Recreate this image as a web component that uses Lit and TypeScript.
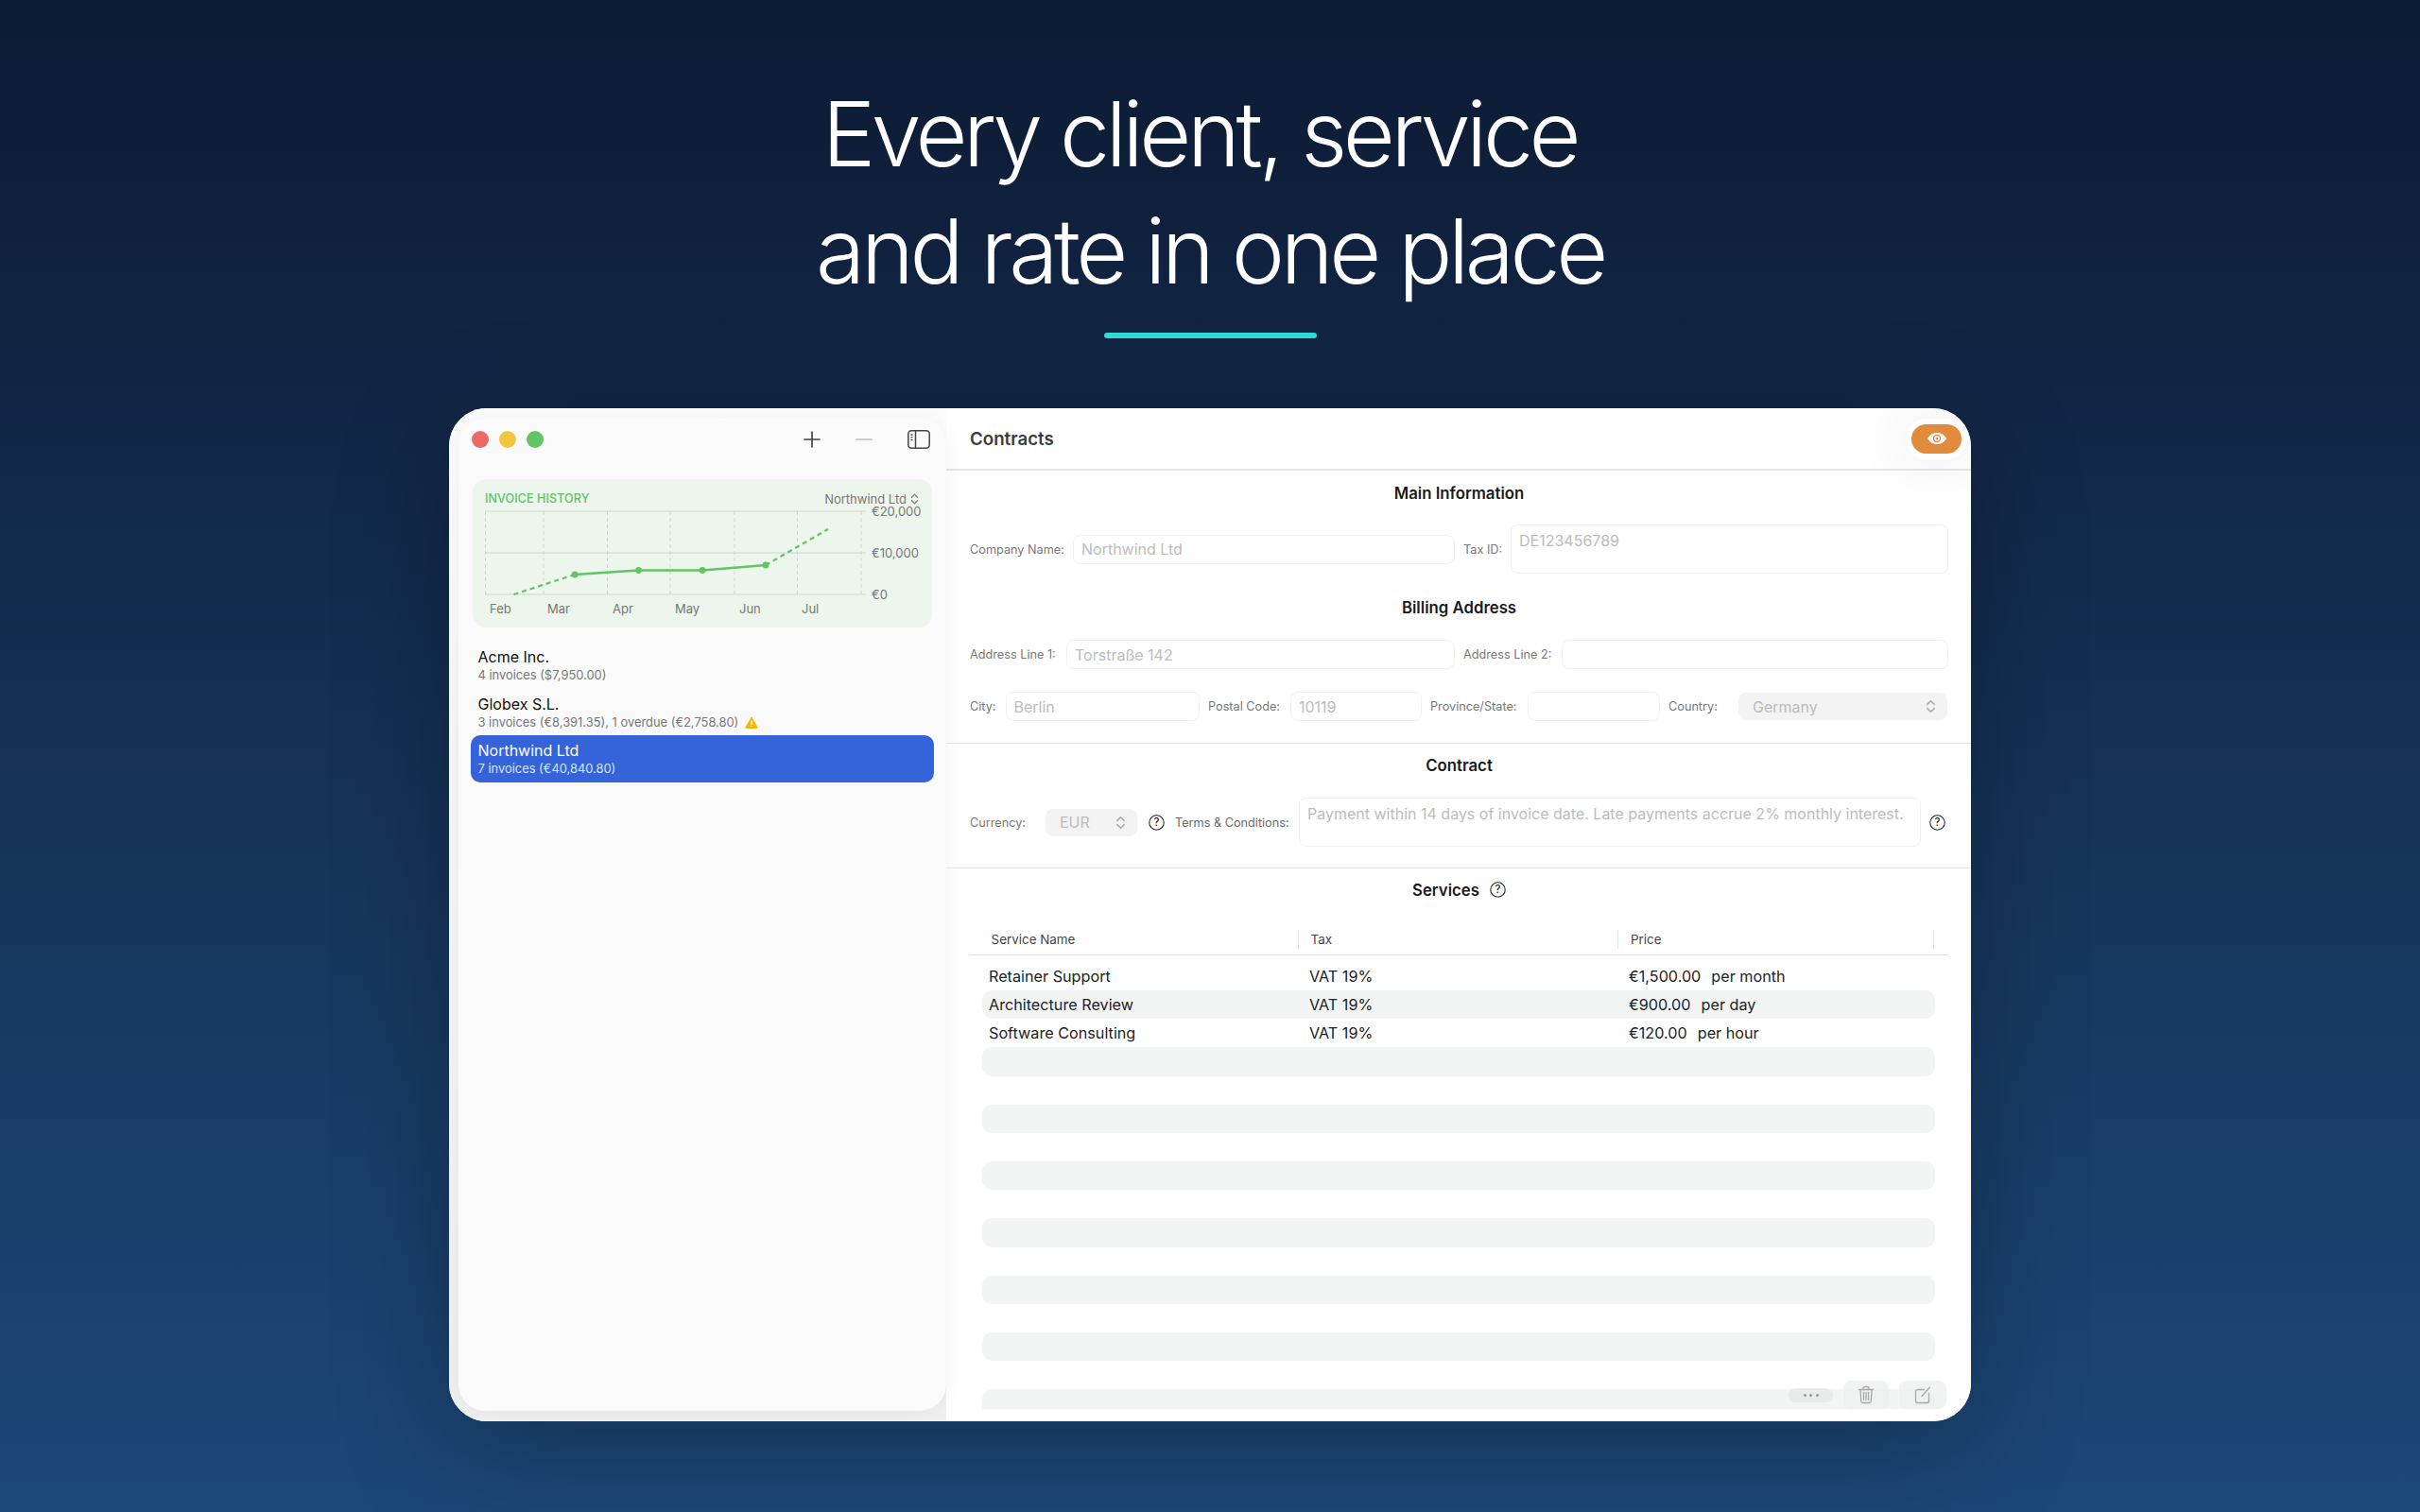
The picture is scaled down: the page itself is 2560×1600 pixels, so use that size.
import { LitElement, html, css, svg } from "lit";
import { customElement } from "lit/decorators.js";

const chevrons = (cls = "chev") => html`<svg class=${cls} viewBox="0 0 10 16" fill="none" stroke="currentColor" stroke-width="1.4" stroke-linecap="round" stroke-linejoin="round"><path d="M1.5 6 5 2.500 8.500 6M1.500 10 5 13.500 8.500 10"/></svg>`;
const help = (cls = "help") => html`<svg class=${cls} viewBox="0 0 16 16"><circle cx="8" cy="8" r="7.300" fill="none" stroke="#222" stroke-width="1"/><text x="8" y="11.700" text-anchor="middle" font-size="10.500" font-weight="500" fill="#222" font-family="Inter, sans-serif">?</text></svg>`;

const gridX = [13.5, 75, 142.5, 209, 277, 343.5, 411];
const months: [string, number][] = [["Feb", 18], ["Mar", 79], ["Apr", 148], ["May", 214], ["Jun", 282], ["Jul", 348]];
const yLabels: [string, number][] = [["€20,000", 1], ["€10,000", 45], ["€0", 89]];

const rows = [
  ["Retainer Support", "VAT 19%", "€1,500.00", "per month"],
  ["Architecture Review", "VAT 19%", "€900.00", "per day"],
  ["Software Consulting", "VAT 19%", "€120.00", "per hour"],
  ...Array.from({ length: 13 }, () => ["", "", "", ""]),
];

@customElement("app-root")
export class AppRoot extends LitElement {
  static styles = css`
    :host { display: block; width: 2560px; height: 1600px; overflow: hidden; font-family: Inter, "Liberation Sans", sans-serif; background: linear-gradient(180deg, #0d1a33 0%, #1c4878 100%); }
    * { box-sizing: border-box; }
    .page { display: flex; flex-direction: column; align-items: center; padding-top: 80px; height: 100%; }
    h1 { margin: 0; font-size: 95px; line-height: 124px; font-weight: 350; color: #fff; text-align: center; letter-spacing: -4.400px; }
    h1 span { display: block; }
    h1 .l1 { padding-right: 22px; }
    .bar { width: 225px; height: 6px; border-radius: 3px; background: #2fdcd6; margin-top: 24px; }
    .shadow { width: 1610px; height: 1072px; margin-top: 74px; border-radius: 40px; box-shadow: 0 30px 120px rgba(0,0,0,.28); }
    .win { position: relative; width: 1610px; height: 1072px; border-radius: 40px; overflow: hidden; background: #f4f4f4; display: grid; grid-template-columns: 526px 1fr; grid-template-rows: minmax(0, 1fr); }
    .side-wrap { padding: 11px 0 11px 10px; background: linear-gradient(180deg, #fcfcfc 0%, #f5f5f5 40%, #efefef 100%); position: relative; z-index: 2; }
    .side { height: 100%; background: #fafafa; border-radius: 28px; box-shadow: 0 0 22px rgba(0,0,0,.05); }
    .tools { height: 44px; margin-bottom: 20px; display: flex; align-items: center; padding: 0 17px 0 14px; }
    .light { width: 18px; height: 18px; border-radius: 50%; margin-right: 11px; }
    .red { background: #ec6a66; } .yel { background: #f3c63f; } .grn { background: #62c462; }
    .tools .sp { flex: 1; }
    .tools svg { display: block; }
    .ic-plus { width: 18px; height: 18px; margin-right: 37px; }
    .ic-minus { width: 18px; height: 18px; margin-right: 37px; }
    .ic-side { width: 24px; height: 20px; }
    .card { margin: 0 15px; height: 157px; border-radius: 14px; background: #ecf6ec; }
    .card-h { height: 33px; padding: 13px 14px 0 13px; display: flex; justify-content: space-between; align-items: flex-start; font-size: 12.5px; line-height: 16px; }
    .card-t { color: #60c066; font-weight: 500; letter-spacing: .1px; }
    .pick { color: #777; display: flex; align-items: center; gap: 4px; font-size: 13px; height: 16px; }
    .chev { width: 9px; height: 14px; display: block; }
    .chart { display: block; width: 486px; height: 124px; overflow: visible; }
    .chart text { font-family: Inter, sans-serif; font-size: 13px; fill: #777; }
    .list { margin: 15px 13px 0 13px; }
    .item { height: 49.5px; padding: 6px 8px 0 7.5px; border-radius: 10px; color: #111; }
    .name { font-size: 16px; line-height: 20px; }
    .sub { font-size: 12.9px; line-height: 20px; color: #777; display: flex; align-items: center; gap: 7px; }
    .item.sel { background: #3563d9; color: #fff; }
    .item.sel .sub { color: #dbe4fa; }
    .warn { width: 14px; height: 13px; }
    .main { background: #fff; display: flex; flex-direction: column; min-width: 0; min-height: 0; padding-bottom: 13px; position: relative; }
    .main > * { flex: none; }
    .top { height: 66px; display: flex; align-items: center; justify-content: space-between; padding: 0 10px 0 25px; border-bottom: 2px solid #e6e6e6; }
    .top b { font-size: 18.700px; font-weight: 600; color: #3d3d3d; }
    .pill { width: 53px; height: 31px; border-radius: 16px; background: #e38b3d; display: flex; align-items: center; justify-content: center; box-shadow: 0 0 0 6px #fff, 0 0 50px 22px rgba(0,0,0,.045); }
    .pill svg { width: 22px; height: 14px; }
    .sec { text-align: center; font-size: 16.800px; line-height: 20px; font-weight: 600; color: #1a1a1a; }
    .pad { padding: 0 24px 0 25px; }
    .s1 { margin-top: 14px; }
    .g { display: grid; align-items: center; margin-top: 24px; }
    .r1 { grid-template-columns: 109px 404px 59px 463px; margin-top: 23px; }
    .r2 { grid-template-columns: 102px 411px 113px 409px; }
    .r3 { grid-template-columns: 37.5px 205.5px 96px 139px 112px 140px 83px 221px; }
    .r4 { grid-template-columns: 80px 97px 40px 131px 658px 29px; }
    .lab { font-size: 12.700px; color: #777; white-space: nowrap; }
    .lab.in { padding-left: 9px; }
    .lab.dk { color: #6a6a6a; }
    .f { height: 31px; border: 1.5px solid #f0f0f0; border-radius: 8px; font-size: 16px; color: #bcbcbc; padding: 0 8px; display: flex; align-items: center; white-space: nowrap; }
    .f.tall { height: 52px; align-items: flex-start; padding-top: 6px; }
    .f.tx { height: 52px; align-items: flex-start; padding-top: 6px; overflow: hidden; }
    .sel-f { height: 29px; border-radius: 8px; background: #f3f3f3; font-size: 16px; color: #bcbcbc; display: flex; align-items: center; justify-content: space-between; padding: 0 12px 0 15px; }
    .sel-f .chev { color: #aaa; width: 11px; height: 17px; }
    .help { width: 17px; height: 17px; display: block; }
    .help-c { justify-self: center; }
    .help-e { justify-self: end; margin-right: 3px; }
    hr { border: 0; border-top: 1.5px solid #e8e8e8; margin: 0; }
    .m23 { margin-top: 23px; }
    .m22 { margin-top: 21.500px; }
    .m13 { margin-top: 13px; }
    .h1 { margin-top: 26px; }
    .svc { display: flex; justify-content: center; align-items: center; gap: 11px; }
    .thead { display: grid; grid-template-columns: 347.5px 338.5px 334px; margin: 32px 0 0; height: 27px; padding-bottom: 7px; border-bottom: 1.5px solid #e4e4e4; align-items: stretch; }
    .thead div { font-size: 13.400px; color: #444; display: flex; align-items: center; border-right: 1.5px solid #e6e6e6; padding-left: 13px; height: 20px; }
    .thead div:first-child { padding-left: 22.6px; }
    .main > .body { flex: 1; min-height: 0; overflow: hidden; margin: 7.500px 38px 0 38px; }
    .tr { display: grid; grid-template-columns: 339px 338px 1fr; height: 30.17px; align-items: center; padding-left: 7px; border-radius: 10px; font-size: 16.200px; color: #222; white-space: nowrap; }
    .tr:nth-child(even) { background: #f3f5f5; }
    .price { display: flex; gap: 11px; }
    .main > .float { position: absolute; right: 26px; bottom: 13px; display: flex; align-items: center; gap: 11px; }
    .dots { width: 47px; height: 15px; border-radius: 8px; background: rgba(230,231,231,.85); display: flex; align-items: center; justify-content: center; gap: 3.5px; }
    .dots i { width: 3px; height: 3px; border-radius: 50%; background: #999; }
    .btn { height: 30px; border-radius: 8px; background: rgba(238,239,239,.82); display: flex; align-items: center; justify-content: center; }
    .b1 { width: 48px; } .b2 { width: 50px; }
    .btn svg { width: 18px; height: 20px; }
  `;

  private chart() {
    return html`<svg class="chart" viewBox="0 0 486 124">
      ${gridX.map((x) => svg`<line x1=${x} x2=${x} y1="1" y2="89" stroke="#cfd5cf" stroke-width="1" stroke-dasharray="4 3"/>`)}
      ${[1, 45, 89].map((y) => svg`<line x1="13" x2="416" y1=${y} y2=${y} stroke="#cdd3cd" stroke-width="1.2"/>`)}
      <path d="M43.5 89 108 68" fill="none" stroke="#62c462" stroke-width="2.2" stroke-dasharray="5 4"/>
      <path d="M310 58 376 20" fill="none" stroke="#62c462" stroke-width="2.2" stroke-dasharray="5 4"/>
      <path d="M108 68 175.5 63.5 243 63.5 310 58" fill="none" stroke="#62c462" stroke-width="2.4"/>
      ${[[108, 68], [175.5, 63.5], [243, 63.5], [310, 58]].map(([x, y]) => svg`<circle cx=${x} cy=${y} r="3.4" fill="#62c462"/>`)}
      ${months.map(([m, x]) => svg`<text x=${x} y="109">${m}</text>`)}
      ${yLabels.map(([t, y]) => svg`<text x="422" y=${y + 5}>${t}</text>`)}
    </svg>`;
  }

  render() {
    return html`<div class="page">
      <h1><span class="l1">Every client, service</span><span>and rate in one place</span></h1>
      <div class="bar"></div>
      <div class="shadow">
        <div class="win">
          <div class="side-wrap">
            <aside class="side">
              <div class="tools">
                <span class="light red"></span><span class="light yel"></span><span class="light grn"></span>
                <span class="sp"></span>
                <svg class="ic-plus" viewBox="0 0 18 18" stroke="#444" stroke-width="1.7" stroke-linecap="round"><path d="M9 1v16M1 9h16"/></svg>
                <svg class="ic-minus" viewBox="0 0 18 18" stroke="#bdbdbd" stroke-width="1.7" stroke-linecap="round"><path d="M1 9h16"/></svg>
                <svg class="ic-side" viewBox="0 0 24 20" fill="none" stroke="#444" stroke-width="1.5"><rect x=".8" y=".8" width="22.4" height="18.4" rx="3.5"/><path d="M8.5 1v18"/><path d="M3.5 5h2M3.5 7.8h2M3.5 10.6h2" stroke-width="1.3"/></svg>
              </div>
              <div class="card">
                <div class="card-h"><span class="card-t">INVOICE HISTORY</span><span class="pick">Northwind Ltd ${chevrons()}</span></div>
                ${this.chart()}
              </div>
              <div class="list">
                <div class="item"><div class="name">Acme Inc.</div><div class="sub">4 invoices ($7,950.00)</div></div>
                <div class="item"><div class="name">Globex S.L.</div><div class="sub">3 invoices (€8,391.35), 1 overdue (€2,758.80)
                  <svg class="warn" viewBox="0 0 14 13"><path d="M7 1 13 11.6a.6.6 0 0 1-.5.9H1.5a.6.6 0 0 1-.5-.9Z" fill="#f5b800" stroke="#f5b800" stroke-linejoin="round"/><path d="M7 4.4v4M7 10v.8" stroke="#fff" stroke-width="1.5"/></svg></div></div>
                <div class="item sel"><div class="name">Northwind Ltd</div><div class="sub">7 invoices (€40,840.80)</div></div>
              </div>
            </aside>
          </div>
          <main class="main">
            <div class="top"><b>Contracts</b>
              <div class="pill"><svg viewBox="0 0 22 14"><path d="M1 7C3.5 2.8 7 1 11 1s7.500 1.800 10 6c-2.500 4.200-6 6-10 6S3.500 11.200 1 7Z" fill="#fff"/><circle cx="11" cy="7" r="4.200" fill="#e38b3d"/><circle cx="11" cy="7" r="2.800" fill="#fff"/><circle cx="11" cy="7" r="1.300" fill="#e38b3d"/></svg></div>
            </div>
            <div class="pad s1 sec">Main Information</div>
            <div class="pad g r1">
              <span class="lab">Company Name:</span><div class="f">Northwind Ltd</div>
              <span class="lab in">Tax ID:</span><div class="f tall">DE123456789</div>
            </div>
            <div class="pad sec h1">Billing Address</div>
            <div class="pad g r2">
              <span class="lab">Address Line 1:</span><div class="f">Torstraße 142</div>
              <span class="lab in">Address Line 2:</span><div class="f"></div>
            </div>
            <div class="pad g r3">
              <span class="lab">City:</span><div class="f">Berlin</div>
              <span class="lab in">Postal Code:</span><div class="f">10119</div>
              <span class="lab in">Province/State:</span><div class="f"></div>
              <span class="lab in">Country:</span><div class="sel-f">Germany ${chevrons()}</div>
            </div>
            <hr class="m23" />
            <div class="pad sec m13">Contract</div>
            <div class="pad g r4">
              <span class="lab">Currency:</span><div class="sel-f">EUR ${chevrons()}</div>
              ${help("help help-c")}
              <span class="lab dk">Terms &amp; Conditions:</span>
              <div class="f tx">Payment within 14 days of invoice date. Late payments accrue 2% monthly interest.</div>
              ${help("help help-e")}
            </div>
            <hr class="m22" />
            <div class="pad sec svc m13"><span>Services</span>${help()}</div>
            <div class="pad"><div class="thead"><div>Service Name</div><div>Tax</div><div>Price</div></div></div>
            <div class="body">
              ${rows.map((r) => html`<div class="tr"><span>${r[0]}</span><span>${r[1]}</span><span class="price"><span>${r[2]}</span><span>${r[3]}</span></span></div>`)}
            </div>
            <div class="float">
              <div class="dots"><i></i><i></i><i></i></div>
              <div class="btn b1"><svg viewBox="0 0 18 20" fill="none" stroke="#a8a8a8" stroke-width="1.3" stroke-linecap="round"><path d="M1.500 4.500h15M6 4.500V3a1.500 1.500 0 0 1 1.500-1.500h3A1.500 1.500 0 0 1 12 3v1.500M3 4.500l.8 12.500a1.800 1.800 0 0 0 1.800 1.500h6.800a1.800 1.800 0 0 0 1.800-1.500L15 4.500M6.500 7.500v8M9 7.500v8M11.500 7.500v8"/></svg></div>
              <div class="btn b2"><svg viewBox="0 0 18 20" fill="none" stroke="#a8a8a8" stroke-width="1.3" stroke-linecap="round"><path d="M10.500 4.500H3.500A2 2 0 0 0 1.500 6.500v10a2 2 0 0 0 2 2h10a2 2 0 0 0 2-2v-8"/><path d="M8 11.500 16.500 2"/></svg></div>
            </div>
          </main>
        </div>
      </div>
    </div>`;
  }
}
